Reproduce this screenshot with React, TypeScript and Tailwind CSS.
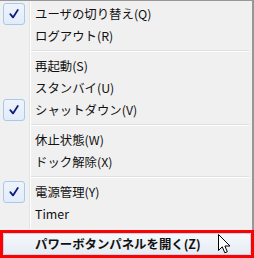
import React from "react";

const font = { fontFamily: '"Noto Sans CJK JP", "Noto Sans", sans-serif' };

function Check() {
  return (
    <div className="ml-[3px] w-[22px] h-[22px] rounded-[3px] border border-[#a9c8ef] bg-gradient-to-b from-[#eef4fc] to-[#e2ecf9] flex items-center justify-center">
      <svg width="12" height="12" viewBox="0 0 12 12">
        <path d="M2.3 6.2 L5 9.4 L9.8 2" fill="none" stroke="#101c7a" strokeWidth="1.8" strokeLinejoin="round" strokeLinecap="round" />
      </svg>
    </div>
  );
}

function Row({ h, checked, children }: { h: number; checked?: boolean; children?: React.ReactNode }) {
  return (
    <div className="flex" style={{ height: h }}>
      <div className="w-[29px] shrink-0">{checked ? <Check /> : null}</div>
      <div className="flex-1 border-l border-[#e2e3e3]">
        <div className="h-full border-l border-white">{children}</div>
      </div>
    </div>
  );
}

function Item({ label, checked }: { label: string; checked?: boolean }) {
  return (
    <Row h={22} checked={checked}>
      <div className="pl-[4px] pt-px h-full flex items-center text-[12.4px] text-[#111] leading-none">{label}</div>
    </Row>
  );
}

function Sep() {
  return (
    <Row h={8}>
      <div className="pt-[3px] pr-[3px]">
        <div className="h-px bg-[#e0e0e0]" />
        <div className="h-px bg-white" />
      </div>
    </Row>
  );
}

export default function App() {
  return (
    <div className="w-[254px] h-[258px] bg-[#f0f0f0] flex flex-col relative overflow-hidden" style={font}>
      <div className="flex-1 border-t border-r-2 border-[#979797] flex flex-col">
        <Row h={2} />
        <Item label="ユーザの切り替え(Q)" checked />
        <Item label="ログアウト(R)" />
        <Sep />
        <Item label="再起動(S)" />
        <Item label="スタンバイ(U)" />
        <Item label="シャットダウン(V)" checked />
        <Sep />
        <Item label="休止状態(W)" />
        <Item label="ドック解除(X)" />
        <Sep />
        <Item label="電源管理(Y)" checked />
        <Item label="Timer" />
        <Row h={4} />
      </div>
      <div className="h-[28px] border-[3px] border-[#ff0000] bg-[#f0f0f0] flex">
        <div className="flex-1 rounded-[2px] border border-[#c5d4e6] bg-gradient-to-b from-[#f6f8fb] to-[#e6ecf4] pl-[31px] pt-px flex items-center text-[12.4px] font-bold text-[#111] leading-none">
          パワーボタンパネルを開く(Z)
        </div>
      </div>
      <svg className="absolute left-[218px] top-[234px]" width="13" height="21" viewBox="0 0 13 21">
        <path d="M0.5 0.5 L0.5 16.5 L4.3 12.8 L6.8 18.8 L9.3 17.8 L6.9 12 L12 12 Z" fill="#fff" stroke="#000" strokeWidth="1" strokeLinejoin="miter" />
      </svg>
    </div>
  );
}
